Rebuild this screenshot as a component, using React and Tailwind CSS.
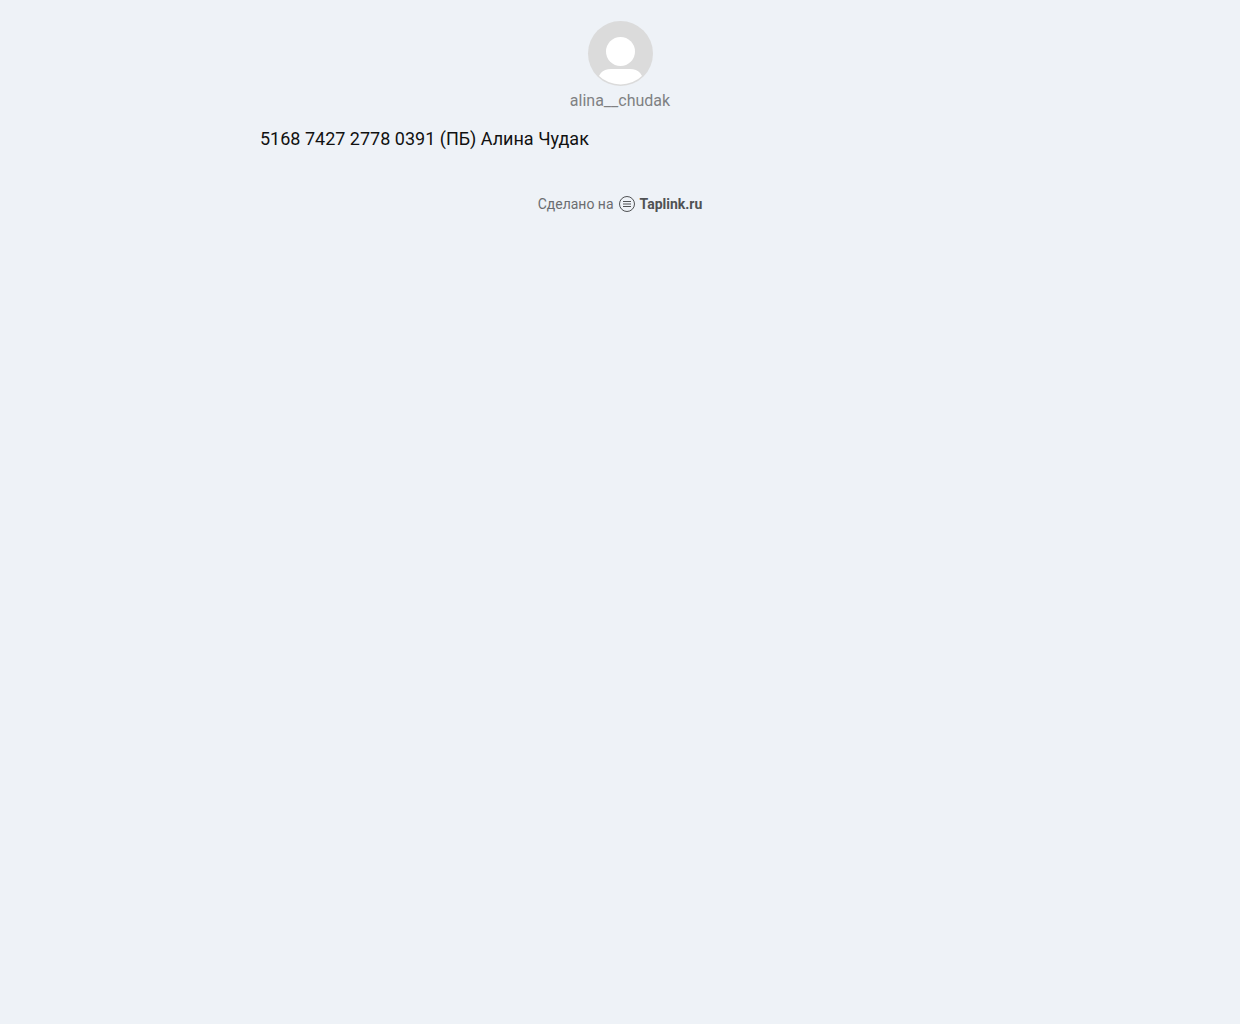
export default function App() {
  return (
    <div className="min-h-screen bg-[#eef2f7] px-5 pt-5 font-['Roboto',sans-serif]">
      <main className="mx-auto max-w-[720px]">
        <header className="flex flex-col items-center">
          <svg className="size-[66px]" viewBox="0 0 66 66" role="img" aria-label="alina__chudak">
            <clipPath id="avatar"><circle cx="33.5" cy="33" r="31.5" /></clipPath>
            <circle cx="33.5" cy="33.5" r="32.5" fill="#dbdbdb" />
            <circle cx="33.5" cy="31.5" r="14.5" fill="#fff" />
            <path clipPath="url(#avatar)" d="M10 66c0-11 5-17 14-17h19c9 0 14 6 14 17z" fill="#fff" />
          </svg>
          <h1 className="mt-[3px] text-base leading-6 text-[#7f8183]">alina__chudak</h1>
        </header>
        <p className="mt-3 text-lg leading-7 text-[#111]">5168 7427 2778 0391 (ПБ) Алина Чудак</p>
      </main>
      <footer className="mt-[41px] flex justify-center text-sm leading-5 text-[#6b6d70]">
        <a href="#" className="flex items-center gap-[5px]">
          <span>Сделано на</span>
          <svg className="size-4" viewBox="0 0 16 16" fill="none" stroke="#505254" aria-hidden="true">
            <circle cx="8" cy="8" r="7.5" />
            <path d="M4 5.5h8M4 8h8M4 10.5h8" />
          </svg>
          <span className="font-bold text-[#505254]">Taplink.ru</span>
        </a>
      </footer>
    </div>
  );
}
